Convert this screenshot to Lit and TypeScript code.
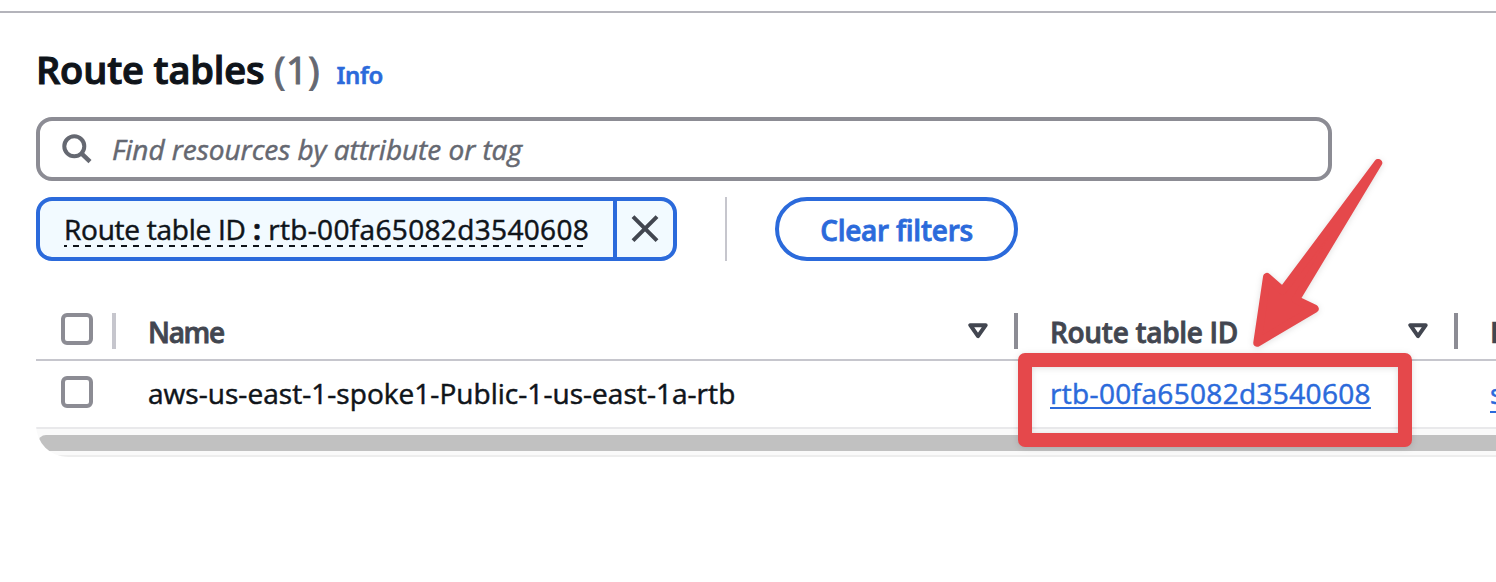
import { LitElement, html, css, svg } from "lit";
import { customElement, property } from "lit/decorators.js";

@customElement("table-checkbox")
class TableCheckbox extends LitElement {
  static styles = css`
    :host {
      display: block;
      box-sizing: border-box;
      width: 32px;
      height: 32px;
      border: 4px solid #8c8c94;
      border-radius: 6px;
      background: #fff;
    }
  `;
  render() {
    return html``;
  }
}

@customElement("filter-token")
class FilterToken extends LitElement {
  @property() name = "";
  @property() value = "";

  static styles = css`
    :host {
      display: flex;
      box-sizing: border-box;
      width: 641px;
      height: 64px;
      border: 4px solid #2b6adb;
      border-radius: 16px;
      background: #f2faff;
      overflow: hidden;
    }
    .label {
      box-sizing: border-box;
      width: 573px;
      padding-left: 24px;
      color: #0f141a;
      white-space: pre;
    }
    .text {
      display: inline-block;
      width: 525px;
      height: 56px;
      line-height: 56px;
      letter-spacing: 0.34px;
      background: repeating-linear-gradient(
          90deg,
          #0f141a 0 3px,
          transparent 3px 9px,
          #0f141a 9px 12px
        )
        0 44px / 525px 2px no-repeat;
    }
    .name {
      letter-spacing: -0.25px;
    }
    .op {
      font-weight: 700;
      letter-spacing: 0;
    }
    .dismiss {
      display: flex;
      flex: 1;
      align-items: center;
      justify-content: center;
      border-left: 4px solid #2b6adb;
      padding: 0;
    }
  `;

  render() {
    return html`
      <div class="label"><span class="text"><span class="name">${this.name}</span><span class="op"> : </span>${this.value}</span></div>
      <div class="dismiss">
        <svg width="28" height="28" viewBox="0 0 28 28" fill="none" stroke="#424650" stroke-width="4">
          <path d="M2 1.7l24 24M26 1.7l-24 24" />
        </svg>
      </div>
    `;
  }
}

@customElement("sort-header")
class SortHeader extends LitElement {
  @property() label = "";

  static styles = css`
    :host {
      display: flex;
      justify-content: space-between;
      box-sizing: border-box;
      height: 36px;
      padding: 0 26px 0 32px;
      border-right: 4px solid #8c8c94;
      color: #424650;
      font-weight: 600;
      letter-spacing: -0.3px;
      line-height: 38px;
      white-space: nowrap;
      -webkit-text-stroke: 0.8px;
    }
    :host(.tight) {
      letter-spacing: -1.3px;
    }
    svg {
      flex: none;
      margin-top: 9px;
    }
  `;

  render() {
    return html`
      <span>${this.label}</span>
      <svg width="20" height="18" viewBox="0 0 20 18" fill="none" stroke="#424650" stroke-width="4" stroke-linejoin="round">
        <path d="M2.3 3.2h15.4L10 14.2z" />
      </svg>
    `;
  }
}

@customElement("app-root")
class AppRoot extends LitElement {
  static styles = css`
    :host {
      display: block;
      position: relative;
      box-sizing: border-box;
      height: 582px;
      overflow: hidden;
      background: #fff;
      padding-top: 11px;
      font-family: "Open Sans", "Noto Sans", sans-serif;
      font-size: 28px;
      font-weight: 400;
      color: #0f141a;
      -webkit-text-stroke: 0.5px;
    }
    .panel {
      border-top: 2px solid #b4b4bb;
      padding: 32px 0 0 36px;
    }
    .heading {
      display: flex;
      align-items: baseline;
      height: 48px;
      line-height: 48px;
      white-space: nowrap;
    }
    .title {
      width: 238px;
      margin: 0;
      font-size: 38px;
      font-weight: 600;
      letter-spacing: -0.15px;
      -webkit-text-stroke: 1.1px;
    }
    .count {
      width: 62.5px;
      font-family: "Noto Sans", sans-serif;
      font-size: 38px;
      font-weight: 400;
      letter-spacing: 0.6px;
      color: #656871;
      -webkit-text-stroke: 0.9px;
    }
    .info {
      font-family: "Noto Sans", sans-serif;
      font-size: 24px;
      font-weight: 600;
      letter-spacing: -0.4px;
      color: #2b6adb;
    }
    .search {
      display: flex;
      align-items: center;
      gap: 20px;
      box-sizing: border-box;
      width: 1296px;
      height: 64px;
      margin-top: 24px;
      padding-left: 22px;
      border: 4px solid #8c8c94;
      border-radius: 16px;
      color: #656871;
      font-style: italic;
      line-height: 56px;
      letter-spacing: -0.04px;
    }
    .filters {
      display: flex;
      height: 64px;
      margin-top: 16px;
    }
    .rule {
      width: 2px;
      margin: 0 48px;
      background: #c6c6cd;
    }
    .clear {
      box-sizing: border-box;
      width: 243px;
      border: 4px solid #2b6adb;
      border-radius: 32px;
      color: #2b6adb;
      font-weight: 600;
      letter-spacing: -0.25px;
      line-height: 58px;
      text-align: center;
      -webkit-text-stroke: 0.8px;
    }
    .table {
      margin-top: 36px;
      height: 160px;
      overflow: hidden;
      border-bottom-left-radius: 32px;
    }
    .row {
      display: grid;
      grid-template-columns: 80px 902px 440px 1fr;
      box-sizing: border-box;
    }
    .head {
      height: 64px;
      padding-top: 16px;
      border-bottom: 2px solid #c6c6cd;
    }
    .body {
      height: 68px;
      padding-top: 14px;
      border-bottom: 2px solid #e9e9eb;
      line-height: 36px;
    }
    .select {
      box-sizing: border-box;
      height: 36px;
      padding-left: 25px;
    }
    .head .select {
      border-right: 4px solid #c6c6cd;
    }
    .body .select {
      padding-top: 1px;
    }
    .cell {
      padding-left: 32px;
      white-space: nowrap;
      min-width: 0;
      letter-spacing: 0.04px;
    }
    .last {
      color: #424650;
      font-weight: 700;
      line-height: 38px;
    }
    .link {
      color: #2b6adb;
      letter-spacing: 0.34px;
      text-decoration: underline 2px;
      text-underline-offset: 3px;
      text-decoration-skip-ink: none;
    }
    .low {
      text-underline-offset: 7px;
    }
    .scroll {
      box-sizing: border-box;
      height: 28px;
      padding: 6px 0 4px 2px;
      background: #fafafa;
      border-bottom: 2px solid #ededed;
    }
    .thumb {
      height: 16px;
      border-radius: 8px 0 0 8px;
      background: #c1c1c1;
    }
    .callout {
      position: absolute;
      left: 1018px;
      top: 353px;
      box-sizing: border-box;
      width: 394px;
      height: 94px;
      border: 14px solid #e5484b;
      border-radius: 7px;
      filter: drop-shadow(0 1px 3px rgba(0, 0, 0, 0.13));
    }
    .arrow {
      position: absolute;
      left: 1240px;
      top: 150px;
      filter: drop-shadow(0 1px 3px rgba(0, 0, 0, 0.13));
    }
  `;

  private arrow() {
    return svg`<path
      d="M1378.2 163L1282.7 290.7L1267 277L1257.3 342.7L1314.7 308.7L1295.8 299.7Z"
      fill="#e5484b" stroke="#e5484b" stroke-width="8" stroke-linejoin="round" />`;
  }

  render() {
    return html`
      <div class="panel">
        <div class="heading">
          <h2 class="title">Route tables</h2>
          <span class="count">(1)</span>
          <span class="info">Info</span>
        </div>
        <div class="search">
          <svg width="30" height="30" viewBox="0 0 30 30" fill="none" stroke="#656871" stroke-width="4">
            <circle cx="12.3" cy="12.3" r="10" />
            <path d="M19.4 19.4l8.6 8.2" stroke-width="4.4" />
          </svg>
          <span>Find resources by attribute or tag</span>
        </div>
        <div class="filters">
          <filter-token name="Route table ID" value="rtb-00fa65082d3540608"></filter-token>
          <div class="rule"></div>
          <div class="clear">Clear filters</div>
        </div>
        <div class="table">
          <div class="row head">
            <div class="select"><table-checkbox></table-checkbox></div>
            <sort-header class="tight" label="Name"></sort-header>
            <sort-header label="Route table ID"></sort-header>
            <div class="cell last">Explicit subnet associations</div>
          </div>
          <div class="row body">
            <div class="select"><table-checkbox></table-checkbox></div>
            <div class="cell">aws-us-east-1-spoke1-Public-1-us-east-1a-rtb</div>
            <div class="cell"><span class="link">rtb-00fa65082d3540608</span></div>
            <div class="cell"><span class="link low">subnet</span></div>
          </div>
          <div class="scroll"><div class="thumb"></div></div>
        </div>
      </div>
      <div class="callout"></div>
      <svg class="arrow" width="150" height="204" viewBox="1240 150 150 204">${this.arrow()}</svg>
    `;
  }
}
